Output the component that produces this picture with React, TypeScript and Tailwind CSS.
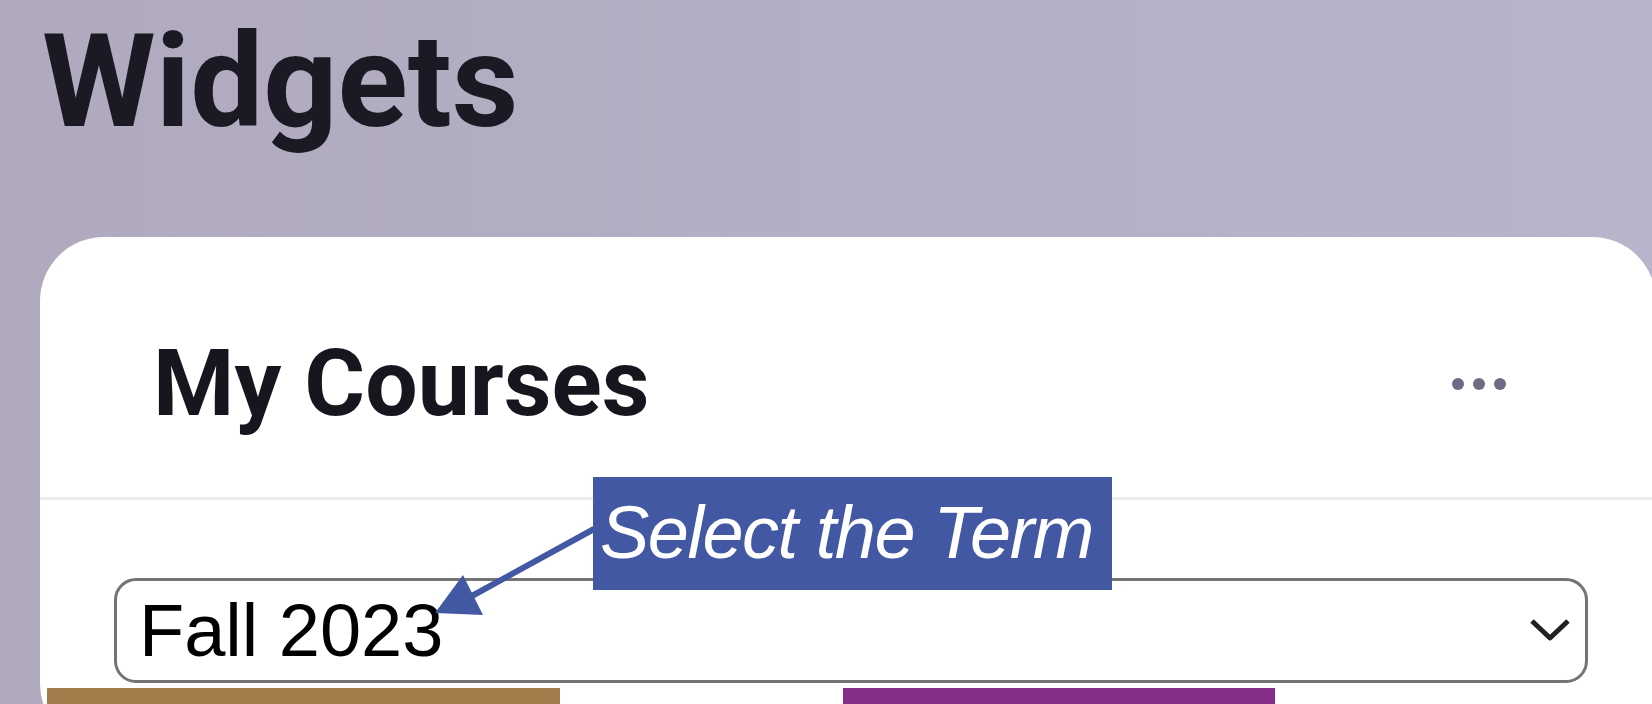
const TILES = [
  { color: 'bg-[#a47b4b]', width: 'w-[513px]' },
  { color: 'bg-[#862d87]', width: 'w-[432px]' },
]

function Dots() {
  return (
    <div className="flex items-center gap-[9px]">
      <span className="w-[12px] h-[12px] rounded-full bg-[#6d6c84]" />
      <span className="w-[12px] h-[12px] rounded-full bg-[#6d6c84]" />
      <span className="w-[12px] h-[12px] rounded-full bg-[#6d6c84]" />
    </div>
  )
}

function TermSelect() {
  return (
    <div className="flex items-center justify-between h-[105px] border-[3px] border-[#747474] rounded-[22px] pl-[22px] pr-[14px]">
      <span className="font-['Liberation_Sans',Arial,sans-serif] text-[74px] leading-none text-black">
        Fall 2023
      </span>
      <svg width="42" height="26" viewBox="0 0 42 26" className="mb-[2px]">
        <polyline
          points="3,4 21,21 39,4"
          fill="none"
          stroke="#222"
          strokeWidth="5"
          strokeLinejoin="round"
        />
      </svg>
    </div>
  )
}

function Callout() {
  return (
    <>
      {/* annotation box laid over the card */}
      <div className="absolute left-[593px] top-[477px] w-[519px] h-[113px] bg-[#4358a2] pl-[7px] pt-[19px]">
        <span className="font-['Liberation_Sans',Arial,sans-serif] italic text-[74px] leading-none tracking-[-1.5px] text-white">
          Select the Term
        </span>
      </div>
      <svg
        className="absolute left-[420px] top-[520px]"
        width="180"
        height="105"
        viewBox="0 0 180 105"
      >
        <line x1="174" y1="9" x2="50" y2="77" stroke="#4358a2" strokeWidth="6" />
        <polygon points="15,93 43,55 63,95" fill="#4358a2" />
      </svg>
    </>
  )
}

export default function App() {
  return (
    <div className="relative w-[1652px] h-[704px] overflow-hidden bg-gradient-to-r from-[#b1aabe] to-[#b7b4cb] pl-[40px] font-['Roboto',sans-serif]">
      <h1 className="mt-[17px] ml-[2px] text-[130px] leading-none font-bold text-[#1b1a24]">
        Widgets
      </h1>

      <div className="mt-[90px] w-[1616px] bg-white rounded-[64px]">
        <div className="flex items-center justify-between pl-[113px] pr-[150px] pt-[100px] pb-[67px] border-b-[3px] border-[#ececec]">
          <h2 className="text-[93px] leading-none font-bold text-[#17161f]">My Courses</h2>
          <Dots />
        </div>

        <div className="pl-[74px] pr-[68px] pt-[78px]">
          <TermSelect />
        </div>

        <div className="flex gap-[283px] pl-[7px] pt-[5px]">
          {TILES.map((t) => (
            <div key={t.color} className={`${t.color} ${t.width} h-[60px]`} />
          ))}
        </div>
      </div>

      <Callout />
    </div>
  )
}
